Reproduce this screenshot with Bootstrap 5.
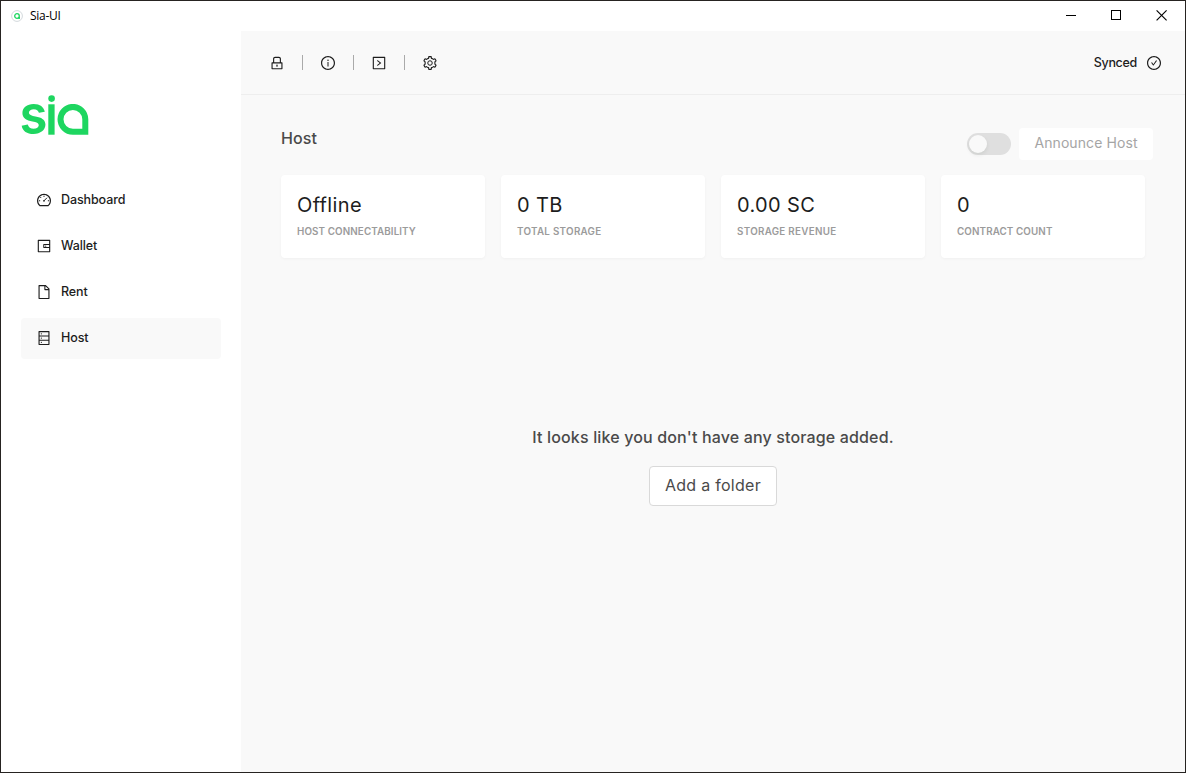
<!DOCTYPE html>
<html lang="en">
<head>
<meta charset="utf-8">
<title>Sia-UI</title>
<meta name="viewport" content="width=device-width, initial-scale=1">
<link href="https://cdn.jsdelivr.net/npm/bootstrap@5.3.0/dist/css/bootstrap.min.css" rel="stylesheet">
<script src="https://cdn.jsdelivr.net/npm/bootstrap@5.3.0/dist/js/bootstrap.bundle.min.js" defer></script>
<style>
body { font-family: Inter, "Liberation Sans", sans-serif; color: #1d1d1d; background: #fff; font-size: 13px; line-height: 1.5; }
.app-window { height: 773px; border: 1px solid #262321; }
.title-bar { height: 30px; flex: none; font-family: "Open Sans", sans-serif; font-size: 12px; color: #000; padding-left: 10px; }
.title-name { letter-spacing: -.3px; margin-left: 7px; }
.win-controls { gap: 35px; margin-right: 18px; padding-bottom: 2px; }
.side-bar { width: 240px; flex: none; padding: 44px 20px 0; }
.sia-logo { display: block; margin: 0 0 22px -1px; }
.side-link { height: 41px; margin-bottom: 5px; padding: 0 0 2px 16px; gap: 10px; border-radius: 4px; color: #1d1d1d; font-size: 12.5px; font-weight: 450; letter-spacing: -.1px; }
.side-link span { padding-top: 2px; }
.side-link:hover { color: #000; }
.side-link.active { background: #f9f9f9; }
.ic { width: 14px; height: 14px; fill: currentColor; display: block; flex: none; }
.main-pane { background: #f9f9f9; }
.tool-bar { height: 64px; flex: none; border-bottom: 1px solid #eee; padding: 0 24px 0 29px; }
.tool-sep { width: 1px; height: 15px; background: #aaa; margin: 0 18px; }
.synced-label { font-weight: 450; font-size: 12.5px; letter-spacing: -.3px; margin-right: 10px; padding-top: 2px; }
.host-head { padding: 33px 32px 0 40px; height: 80px; flex: none; }
.host-title { font-size: 16px; font-weight: 450; letter-spacing: .1px; line-height: 24px; color: #4a4a4a; margin: -2px 0 0; }
.host-switch { width: 44px; height: 22px; border-radius: 11px; background: #dfdfdf; padding: 2px; margin: 5px 8px 0 0; }
.host-knob { width: 18px; height: 18px; border-radius: 50%; background: #f9f9f9; box-shadow: 0 2px 4px rgba(0,35,11,.08); }
.announce-btn { width: 134px; height: 32px; background: #fff; border: 0; border-radius: 4px; color: #a5a5a5; font-size: 14px; letter-spacing: .09px; padding: 0 0 3px; }
.stat-row { padding: 0 40px; gap: 16px; flex: none; }
.stat-card { height: 83px; border: 0; border-radius: 4px; padding: 15px 16px 0; flex: 1 1 0; box-shadow: 0 1px 3px rgba(0,0,0,.04); }
.stat-value { font-size: 20px; letter-spacing: .35px; line-height: 30px; color: #1d1d1d; white-space: nowrap; }
.stat-label { font-size: 9.8px; font-weight: 600; letter-spacing: .12px; line-height: 15px; margin-top: 4px; color: #9b9b9b; white-space: nowrap; }
.stat-label.wider { letter-spacing: .3px; }
.empty-state { padding-top: 167px; }
.empty-text { font-size: 16px; font-weight: 500; letter-spacing: .15px; line-height: 24px; color: #4a4a4a; white-space: nowrap; }
.folder-btn { width: 128px; height: 40px; margin-top: 17px; background: #fff; border: 1px solid #d9d9d9; border-radius: 4px; color: #4a4a4a; font-size: 16px; letter-spacing: .28px; padding: 0 0 2px; }
</style>
</head>
<body>
<div class="app-window d-flex flex-column overflow-hidden">
  <header class="title-bar d-flex align-items-center">
    <svg width="12" height="12" viewBox="0 0 12 12" fill="none"><circle cx="6" cy="6" r="5.4" stroke="#d3d9dc"/><circle cx="6" cy="6" r="2.3" stroke="#1ed660" stroke-width="1.3"/><rect x="7.2" y="7" width="1.8" height="1.9" fill="#1ed660"/></svg>
    <span class="title-name">Sia-UI</span>
    <div class="win-controls d-flex align-items-center ms-auto">
      <svg width="10" height="11" viewBox="0 0 10 11" shape-rendering="crispEdges"><rect y="5" width="10" height="1"/></svg>
      <svg width="10" height="10" viewBox="0 0 10 10" fill="none" stroke="#000"><rect x=".5" y=".5" width="9" height="9"/></svg>
      <svg width="11" height="11" viewBox="0 0 11 11" stroke="#000" stroke-width="1.1"><line x1=".6" y1=".4" x2="10.6" y2="10.4"/><line x1="10.6" y1=".4" x2=".6" y2="10.4"/></svg>
    </div>
  </header>

  <div class="d-flex flex-grow-1">
    <aside class="side-bar">
      <svg class="sia-logo" width="72" height="83" viewBox="-1 -20 72 83" fill="#1ed660">
        <text x="-1.4" y="39.4" font-family="Inter, sans-serif" font-size="55" font-weight="600" textLength="28" lengthAdjust="spacingAndGlyphs">s</text>
        <circle cx="30.6" cy="3.6" r="3.3"/>
        <rect x="27.3" y="9.3" width="6.3" height="30.4"/>
        <svg x="36" y="9" width="32" height="31" viewBox="0 0 32 31" fill="none" stroke="#1ed660" stroke-width="6"><path d="M28.3 27.7V15.3A12.4 12.4 0 1 0 15.9 27.7Z"/></svg>
      </svg>
      <nav class="nav flex-column">
        <a class="side-link nav-link d-flex align-items-center" href="#"><svg class="ic" viewBox="64 64 896 896"><path d="M924.8 385.6a446.7 446.7 0 0 0-96-142.4 446.7 446.7 0 0 0-142.4-96C631.1 123.8 572.5 112 512 112s-119.1 11.8-174.4 35.2a446.7 446.7 0 0 0-142.4 96 446.7 446.7 0 0 0-96 142.4C75.8 440.9 64 499.5 64 560c0 132.7 58.3 257.7 159.9 343.1l1.7 1.4c5.8 4.8 13.1 7.5 20.6 7.5h531.7c7.5 0 14.8-2.7 20.6-7.5l1.7-1.4C901.7 817.7 960 692.7 960 560c0-60.5-11.9-119.1-35.2-174.4zM761.4 836H262.6A371.12 371.12 0 0 1 140 560c0-99.4 38.7-192.8 109-263 70.3-70.3 163.7-109 263-109 99.4 0 192.8 38.7 263 109 70.3 70.3 109 163.7 109 263 0 105.6-44.5 205.5-122.6 276z"/><path d="M512 232v80M184 560h82M758 560h82M277 327l58 58M510 562L705 367" fill="none" stroke="currentColor" stroke-width="64"/><circle cx="510" cy="562" r="56"/></svg><span>Dashboard</span></a>
        <a class="side-link nav-link d-flex align-items-center" href="#"><svg class="ic" viewBox="64 64 896 896"><path d="M880 112H144c-17.7 0-32 14.3-32 32v736c0 17.7 14.3 32 32 32h736c17.7 0 32-14.3 32-32V144c0-17.7-14.3-32-32-32zm-40 464H528V448h312v128zm0 264H184V184h656v200H496c-17.7 0-32 14.3-32 32v192c0 17.7 14.3 32 32 32h344v200zM580 512a40 40 0 1 0 80 0 40 40 0 1 0-80 0z"/></svg><span>Wallet</span></a>
        <a class="side-link nav-link d-flex align-items-center" href="#"><svg class="ic" viewBox="64 64 896 896"><path d="M854.6 288.6L639.4 73.4c-6-6-14.1-9.4-22.6-9.4H192c-17.7 0-32 14.3-32 32v832c0 17.7 14.3 32 32 32h640c17.7 0 32-14.3 32-32V311.3c0-8.5-3.4-16.7-9.4-22.7zM790.2 326H602V137.8L790.2 326zm1.8 562H232V136h302v216a42 42 0 0 0 42 42h216v494z"/></svg><span>Rent</span></a>
        <a class="side-link nav-link active d-flex align-items-center" href="#"><svg class="ic" viewBox="64 64 896 896"><path d="M832 64H192c-17.7 0-32 14.3-32 32v832c0 17.7 14.3 32 32 32h640c17.7 0 32-14.3 32-32V96c0-17.7-14.3-32-32-32zm-600 72h560v208H232V136zm560 480H232V408h560v208zm0 272H232V680h560v208zM304 240a40 40 0 1 0 80 0 40 40 0 1 0-80 0zm0 272a40 40 0 1 0 80 0 40 40 0 1 0-80 0zm0 272a40 40 0 1 0 80 0 40 40 0 1 0-80 0z"/></svg><span>Host</span></a>
      </nav>
    </aside>

    <main class="main-pane d-flex flex-column flex-grow-1">
      <div class="tool-bar d-flex align-items-center">
        <svg class="ic" viewBox="64 64 896 896"><path d="M832 464h-68V240c0-70.7-57.3-128-128-128H388c-70.7 0-128 57.3-128 128v224h-68c-17.7 0-32 14.3-32 32v384c0 17.7 14.3 32 32 32h640c17.7 0 32-14.3 32-32V496c0-17.7-14.3-32-32-32zM332 240c0-30.9 25.1-56 56-56h248c30.9 0 56 25.1 56 56v224H332V240zm460 600H232V536h560v304zM484 701v53c0 4.4 3.6 8 8 8h40c4.4 0 8-3.6 8-8v-53a48.01 48.01 0 1 0-56 0z"/></svg>
        <i class="tool-sep"></i>
        <svg class="ic" viewBox="64 64 896 896"><path d="M512 64C264.6 64 64 264.6 64 512s200.6 448 448 448 448-200.6 448-448S759.4 64 512 64zm0 820c-205.4 0-372-166.6-372-372s166.6-372 372-372 372 166.6 372 372-166.6 372-372 372z"/><path d="M464 336a48 48 0 1 0 96 0 48 48 0 1 0-96 0zm72 112h-48c-4.4 0-8 3.6-8 8v272c0 4.4 3.6 8 8 8h48c4.4 0 8-3.6 8-8V456c0-4.4-3.6-8-8-8z"/></svg>
        <i class="tool-sep"></i>
        <svg class="ic" viewBox="64 64 896 896"><path d="M412.7 696.5l246-178c4.4-3.2 4.4-9.7 0-12.9l-246-178c-5.3-3.8-12.7 0-12.7 6.5V381c0 10.2 4.9 19.9 13.2 25.9L558.6 512 413.2 617.2c-8.3 6-13.2 15.6-13.2 25.9V690c0 6.5 7.4 10.3 12.7 6.5z"/><path d="M880 112H144c-17.7 0-32 14.3-32 32v736c0 17.7 14.3 32 32 32h736c17.7 0 32-14.3 32-32V144c0-17.7-14.3-32-32-32zm-40 728H184V184h656v656z"/></svg>
        <i class="tool-sep"></i>
        <svg class="ic" viewBox="64 64 896 896"><path d="M924.8 625.7l-65.5-56c3.1-19 4.7-38.4 4.7-57.8s-1.6-38.8-4.7-57.8l65.5-56a32.03 32.03 0 0 0 9.3-35.2l-.9-2.6a443.74 443.74 0 0 0-79.7-137.9l-1.8-2.1a32.12 32.12 0 0 0-35.1-9.5l-81.3 28.9c-30-24.6-63.5-44-99.7-57.6l-15.7-85a32.05 32.05 0 0 0-25.8-25.7l-2.7-.5c-52.1-9.4-106.9-9.4-159 0l-2.7.5a32.05 32.05 0 0 0-25.8 25.7l-15.8 85.4a351.86 351.86 0 0 0-99 57.4l-81.9-29.1a32 32 0 0 0-35.1 9.5l-1.8 2.1a446.02 446.02 0 0 0-79.7 137.9l-.9 2.6c-4.5 12.5-.8 26.5 9.3 35.2l66.3 56.6c-3.1 18.8-4.6 38-4.6 57.1 0 19.2 1.5 38.4 4.6 57.1L99 625.5a32.03 32.03 0 0 0-9.3 35.2l.9 2.6c18.1 50.4 44.9 96.9 79.7 137.9l1.8 2.1a32.12 32.12 0 0 0 35.1 9.5l81.9-29.1c29.8 24.5 63.1 43.9 99 57.4l15.8 85.4a32.05 32.05 0 0 0 25.8 25.7l2.7.5a449.4 449.4 0 0 0 159 0l2.7-.5a32.05 32.05 0 0 0 25.8-25.7l15.7-85a350 350 0 0 0 99.7-57.6l81.3 28.9a32 32 0 0 0 35.1-9.5l1.8-2.1c34.8-41.1 61.6-87.5 79.7-137.9l.9-2.6c4.5-12.3.8-26.3-9.3-35zM788.3 465.9c2.5 15.1 3.8 30.6 3.8 46.1s-1.3 31-3.8 46.1l-6.6 40.1 74.7 63.9a370.03 370.03 0 0 1-42.6 73.6L721 702.8l-31.4 25.8c-23.9 19.6-50.5 35-79.3 45.8l-38.1 14.3-17.9 97a377.5 377.5 0 0 1-85 0l-17.9-97.2-37.8-14.5c-28.5-10.8-55-26.2-78.7-45.7l-31.4-25.9-93.4 33.2c-17-22.9-31.2-47.6-42.6-73.6l75.5-64.5-6.5-40c-2.4-14.9-3.7-30.3-3.7-45.5 0-15.3 1.2-30.6 3.7-45.5l6.5-40-75.5-64.5c11.3-26.1 25.6-50.7 42.6-73.6l93.4 33.2 31.4-25.9c23.7-19.5 50.2-34.9 78.7-45.7l37.9-14.3 17.9-97.2c28.1-3.2 56.8-3.2 85 0l17.9 97 38.1 14.3c28.7 10.8 55.4 26.2 79.3 45.8l31.4 25.8 92.8-32.9c17 22.9 31.2 47.6 42.6 73.6L781.8 426l6.5 39.9z"/><circle cx="512" cy="512" r="144" fill="none" stroke="currentColor" stroke-width="64"/></svg>
        <span class="synced-label ms-auto">Synced</span>
        <svg class="ic" viewBox="64 64 896 896"><path d="M699 353h-46.9c-10.2 0-19.9 4.9-25.9 13.3L469 584.3l-71.2-98.8c-6-8.3-15.6-13.3-25.9-13.3H325c-6.5 0-10.3 7.4-6.5 12.7l124.6 172.8a31.8 31.8 0 0 0 51.7 0l210.6-292c3.9-5.3.1-12.7-6.4-12.7z"/><path d="M512 64C264.6 64 64 264.6 64 512s200.6 448 448 448 448-200.6 448-448S759.4 64 512 64zm0 820c-205.4 0-372-166.6-372-372s166.6-372 372-372 372 166.6 372 372-166.6 372-372 372z"/></svg>
      </div>

      <div class="host-head d-flex align-items-start">
        <h1 class="host-title me-auto">Host</h1>
        <div class="host-switch" role="switch" aria-checked="false"><div class="host-knob"></div></div>
        <button class="announce-btn btn" type="button">Announce Host</button>
      </div>

      <section class="stat-row d-flex">
        <div class="stat-card card"><div class="stat-value">Offline</div><div class="stat-label">HOST CONNECTABILITY</div></div>
        <div class="stat-card card"><div class="stat-value">0 TB</div><div class="stat-label wider">TOTAL STORAGE</div></div>
        <div class="stat-card card"><div class="stat-value">0.00 SC</div><div class="stat-label wider">STORAGE REVENUE</div></div>
        <div class="stat-card card"><div class="stat-value">0</div><div class="stat-label">CONTRACT COUNT</div></div>
      </section>

      <section class="empty-state d-flex flex-column align-items-center">
        <div class="empty-text">It looks like you don't have any storage added.</div>
        <button class="folder-btn btn" type="button">Add a folder</button>
      </section>
    </main>
  </div>
</div>
</body>
</html>
